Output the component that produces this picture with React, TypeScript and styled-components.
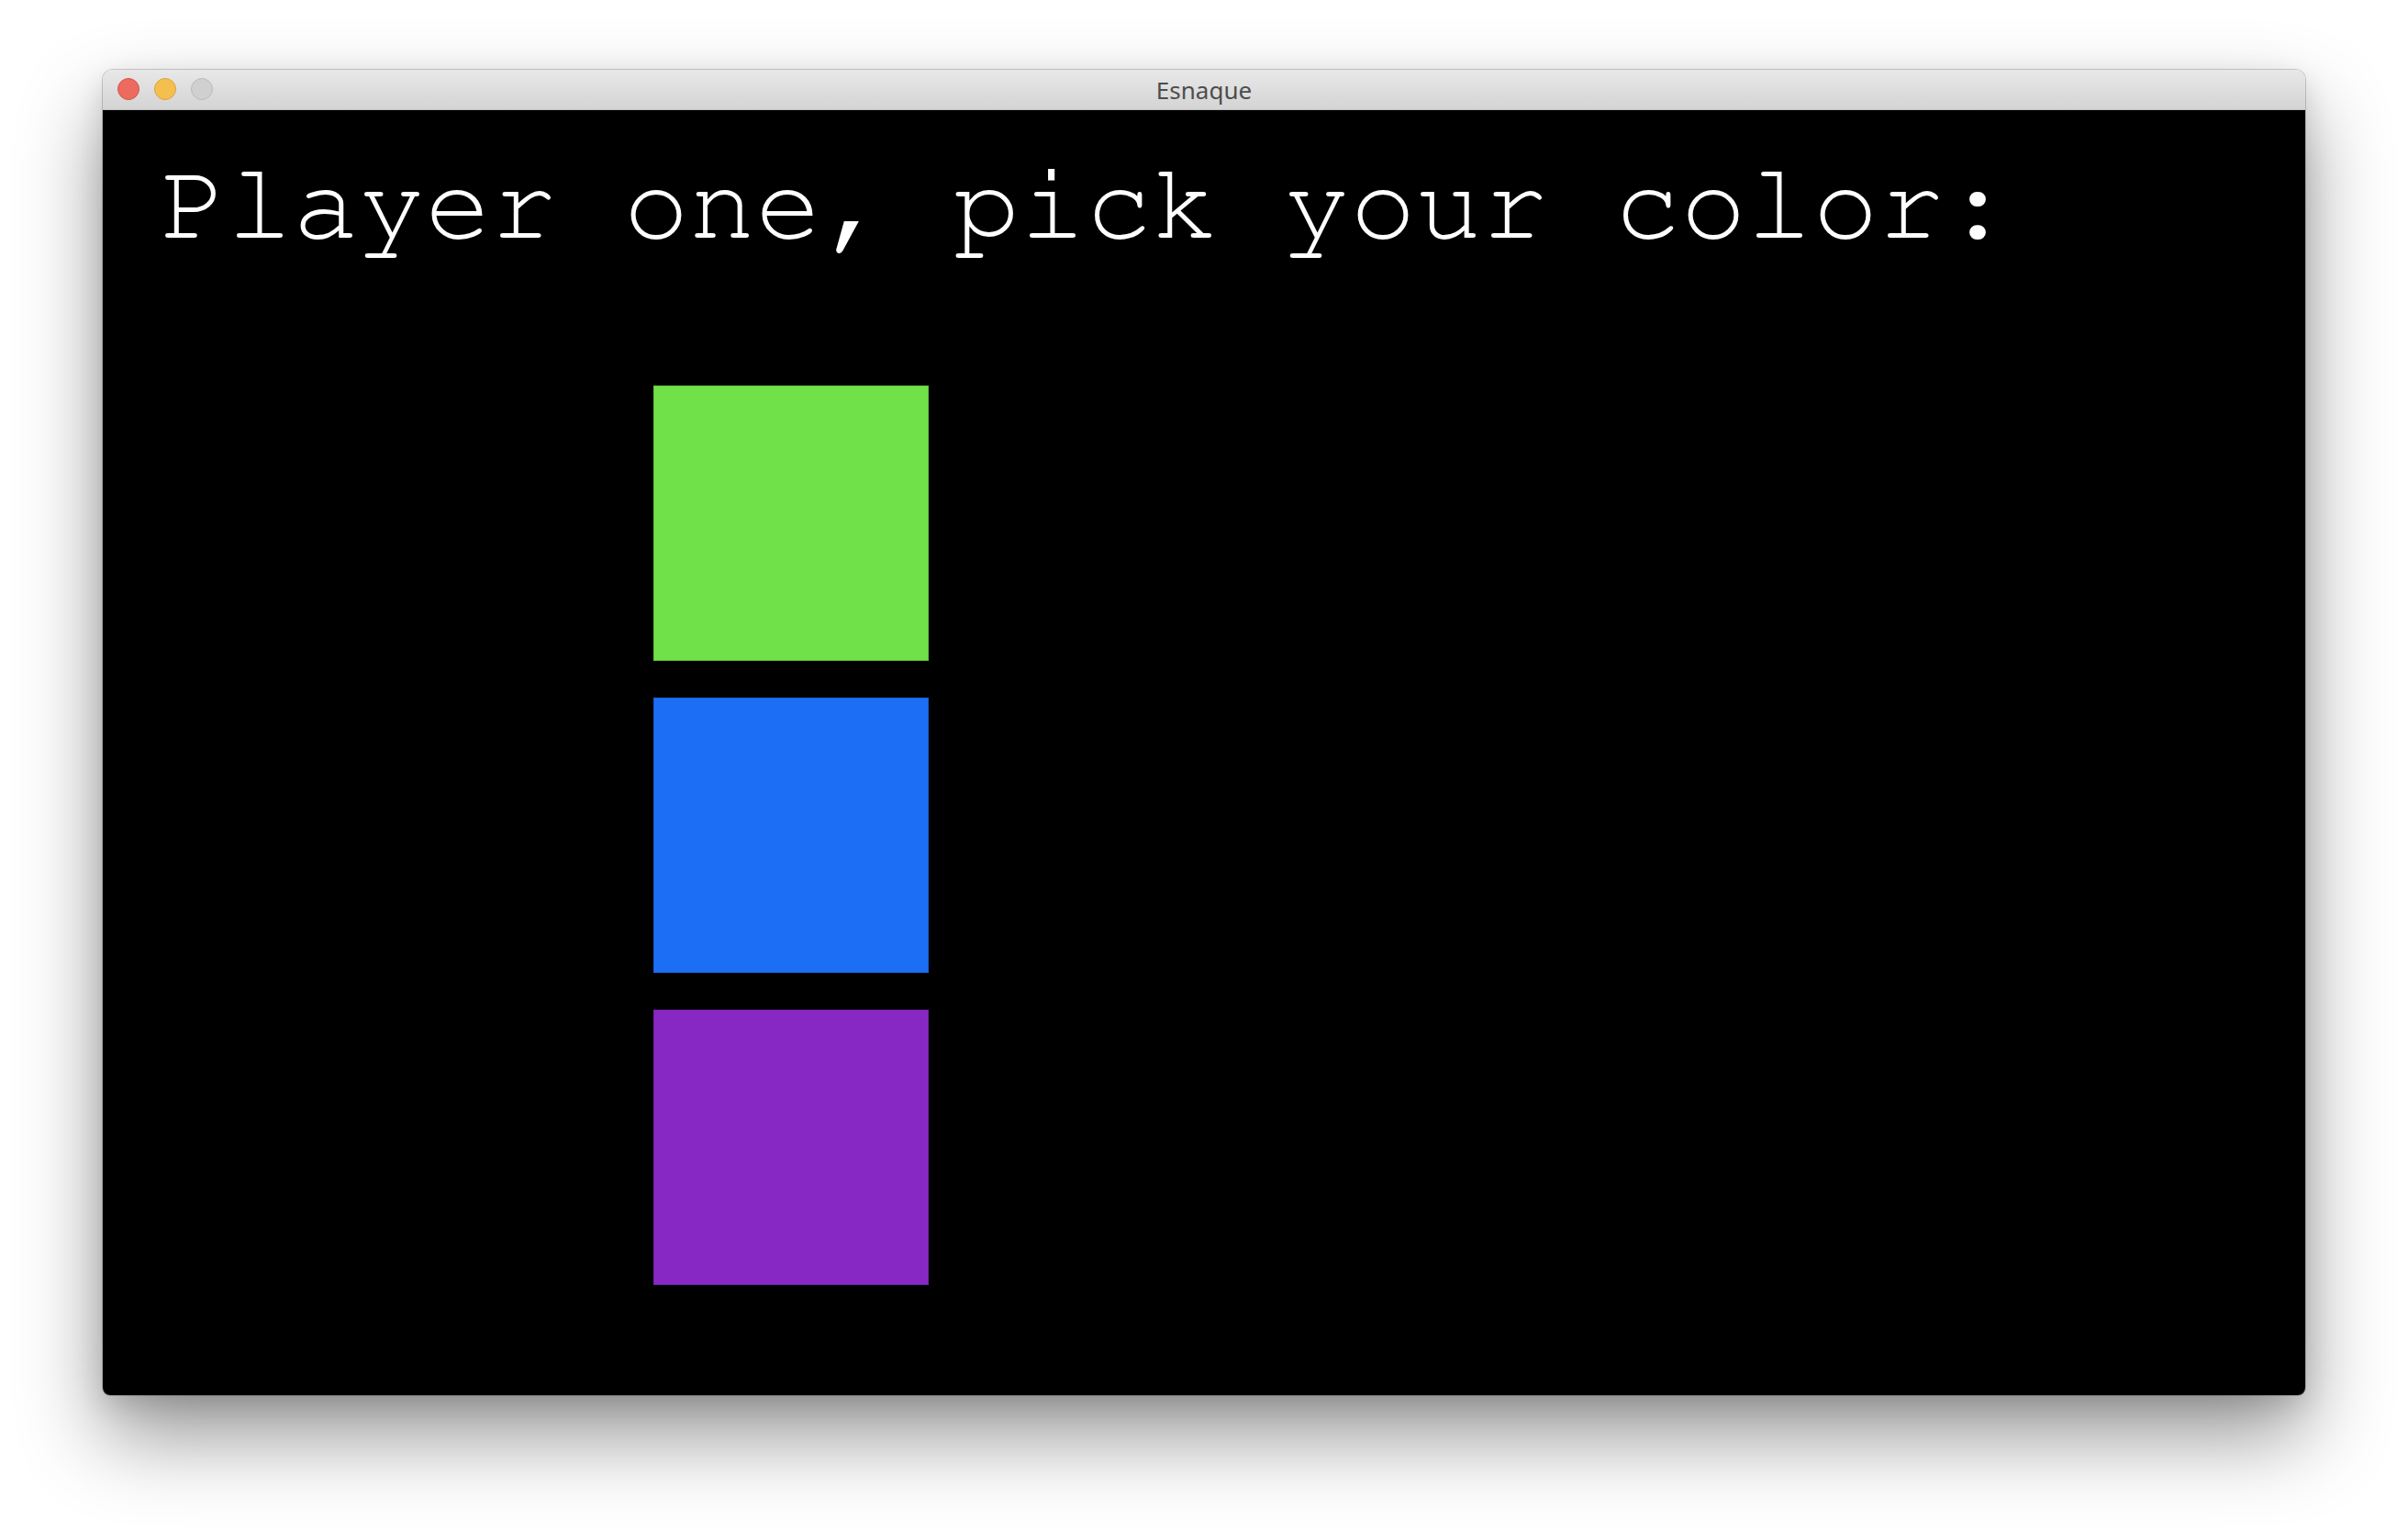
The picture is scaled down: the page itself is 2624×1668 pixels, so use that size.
import React from "react";
import styled, { createGlobalStyle } from "styled-components";

const GlobalStyle = createGlobalStyle`
  html, body {
    margin: 0;
    padding: 0;
    background: #ffffff;
  }
  body {
    font-family: "Liberation Sans", Arial, sans-serif;
  }
`;

const Desktop = styled.div`
  width: 2624px;
  height: 1668px;
  box-sizing: border-box;
  padding: 76px 0 0 112px;
  background: #ffffff;
  overflow: hidden;
`;

const Window = styled.div`
  width: 2400px;
  display: flex;
  flex-direction: column;
  border-radius: 11px 11px 8px 8px;
  overflow: hidden;
  box-shadow: 0 44px 90px rgba(0, 0, 0, 0.42), 0 10px 30px rgba(0, 0, 0, 0.12),
    0 0 0 1px rgba(0, 0, 0, 0.18);
`;

const TitleBar = styled.div`
  position: relative;
  height: 43px;
  display: flex;
  align-items: center;
  justify-content: center;
  background: linear-gradient(#e8e8e8, #d4d4d4);
  border-bottom: 1px solid #bdbdbd;
  box-sizing: content-box;
`;

const Lights = styled.div`
  position: absolute;
  left: 16px;
  top: 9px;
  display: flex;
  gap: 16px;
`;

const Light = styled.span<{ $fill: string; $ring: string }>`
  width: 22px;
  height: 22px;
  border-radius: 50%;
  background: ${(p) => p.$fill};
  border: 1px solid ${(p) => p.$ring};
`;

const Title = styled.span`
  font-family: "Noto Sans", "Liberation Sans", Arial, sans-serif;
  font-size: 26px;
  color: #4d4d4d;
  line-height: 1;
  margin-top: 1px;
`;

const Content = styled.div`
  height: 1400px;
  background: #000000;
  display: flex;
  flex-direction: column;
`;

const Heading = styled.h1`
  margin: 35px 0 0 63px;
  font-family: "FreeMono", "Nimbus Mono PS", "Courier New", "Liberation Mono", monospace;
  font-weight: normal;
  font-size: 120px;
  line-height: 136px;
  color: #ffffff;
  white-space: pre;
`;

const Swatches = styled.div`
  margin: 129px 0 0 600px;
  display: grid;
  grid-template-columns: 300px;
  gap: 40px;
`;

const Swatch = styled.div<{ $color: string; $edge: string }>`
  width: 300px;
  height: 300px;
  box-sizing: border-box;
  background: ${(p) => p.$color};
  border: 1px solid ${(p) => p.$edge};
`;

const colors = [
  { fill: "#70e148", edge: "#5fc23b" },
  { fill: "#1c6ef5", edge: "#185fd2" },
  { fill: "#8828c4", edge: "#7522a8" },
];

export default function App() {
  return (
    <>
      <GlobalStyle />
      <Desktop>
        <Window>
          <TitleBar>
            <Lights>
              <Light $fill="#ed6a5e" $ring="#d4574b" />
              <Light $fill="#f5bf4f" $ring="#d9a33f" />
              <Light $fill="#d0d0d0" $ring="#bababa" />
            </Lights>
            <Title>Esnaque</Title>
          </TitleBar>
          <Content>
            <Heading>Player one, pick your color:</Heading>
            <Swatches>
              {colors.map((c) => (
                <Swatch key={c.fill} $color={c.fill} $edge={c.edge} />
              ))}
            </Swatches>
          </Content>
        </Window>
      </Desktop>
    </>
  );
}
